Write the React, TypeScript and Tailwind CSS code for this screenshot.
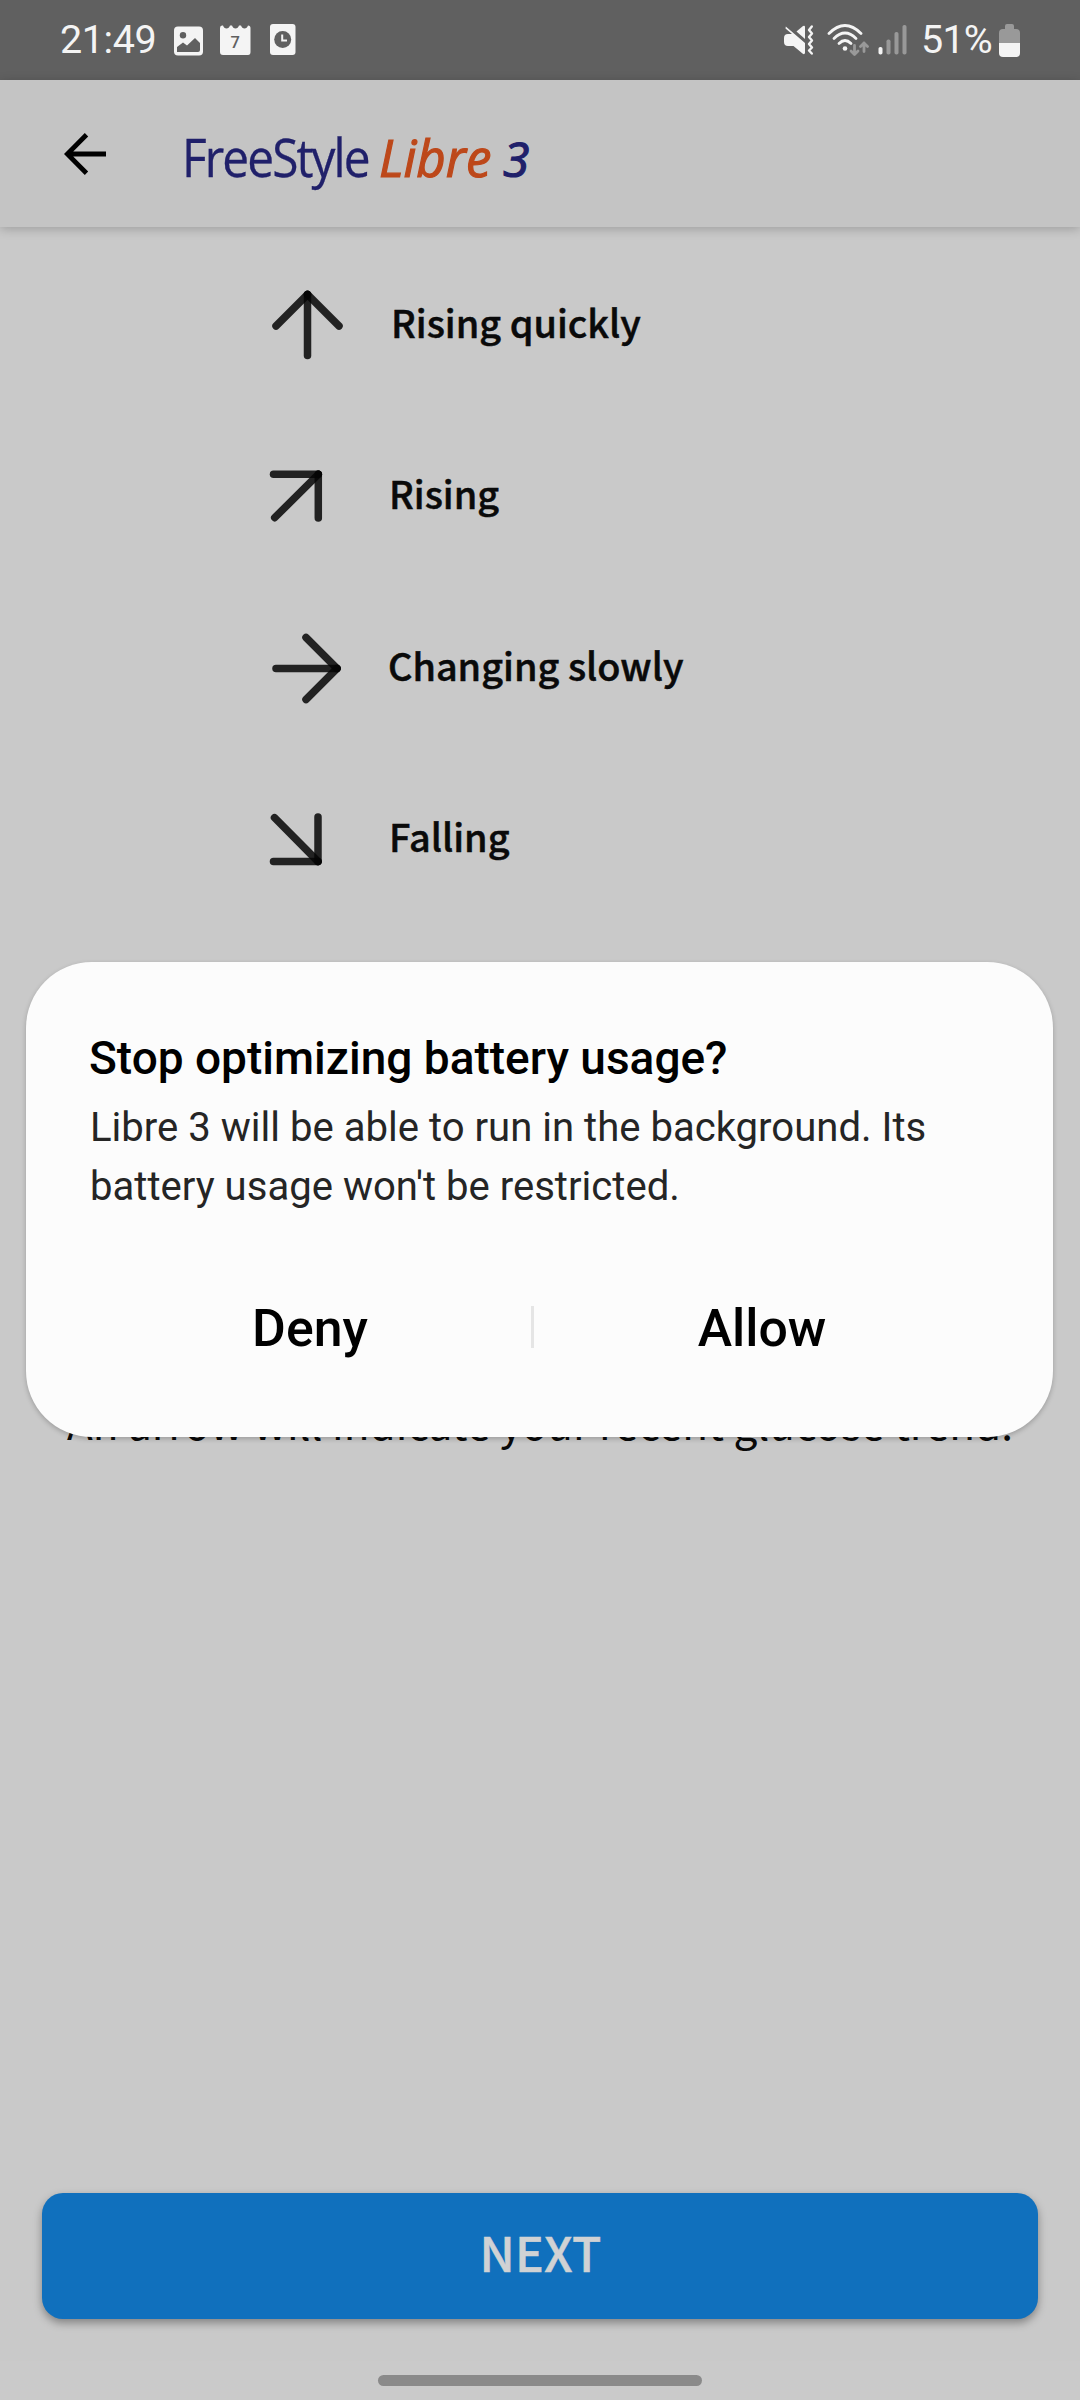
type Line = [number, number, number, number];

const trends: { label: string; lines: Line[]; pad: string }[] = [
  { label: "Rising quickly", pad: "pl-[45px]", lines: [[41.5, 9.5, 41.5, 70.5], [41.5, 9.5, 10, 41], [41.5, 9.5, 73, 41]] },
  { label: "Rising", pad: "pl-[43px]", lines: [[52.3, 18.3, 7.5, 18.3], [52.3, 18.3, 52.3, 62], [52.3, 18.3, 8.7, 61.7]] },
  { label: "Changing slowly", pad: "pl-[42px]", lines: [[71, 40.5, 10, 40.5], [71, 40.5, 40, 9.5], [71, 40.5, 40, 71.5]] },
  { label: "Falling", pad: "pl-[43px]", lines: [[52, 62.5, 7.5, 62.5], [52, 62.5, 52, 18], [52, 62.5, 8.5, 18.7]] },
];

function StatusBar() {
  return (
    <div className="flex h-[80px] shrink-0 items-center justify-between bg-[#606060] font-['Roboto',sans-serif] text-[39.5px] leading-[46px] text-[#f4f4f4]">
      <div className="flex items-center pl-[60px]">
        <span className="w-[114px] whitespace-nowrap tracking-[-0.4px]">21:49</span>
        <svg width="30" height="30" viewBox="0 0 30 30" className="mt-[1px]">
          <rect x="0" y="0.5" width="29" height="29" rx="4" fill="#f4f4f4" />
          <circle cx="9" cy="9.3" r="3.2" fill="#606060" />
          <path d="M3 26V21L9 16.5L13 19.5L21 12L26 17V24Q26 26 24 26Z" fill="#606060" />
        </svg>
        <svg width="31" height="31" viewBox="0 0 31 31" className="ml-[16px] mt-[1px]">
          <path
            d="M0 3Q0 .5 2 .5H3Q4 3.5 6.5 3.5T10 .5H12Q13 3.5 15.5 3.5T19 .5H21Q22 3.5 24.5 3.5T28 .5Q30.500 .5 30.500 3V27Q30.500 30 28 30H3Q0 30 0 27Z"
            fill="#f4f4f4"
          />
          <text x="15.3" y="22.800" textAnchor="middle" fontSize="16.5" fontWeight="500" fontFamily="Roboto" fill="#606060">7</text>
        </svg>
        <svg width="26" height="32" viewBox="0 0 26 32" className="ml-[19px]">
          <rect x="0" y="0" width="25.500" height="31" rx="3" fill="#f4f4f4" />
          <circle cx="12.700" cy="15.500" r="8.500" fill="#606060" />
          <path d="M12.200 10.500V16.500H17" fill="none" stroke="#f4f4f4" strokeWidth="2" />
        </svg>
      </div>
      <div className="flex items-center pr-[60px]">
        <svg width="31" height="32" viewBox="0 0 31 32">
          <path d="M1.800 2.500L21 19V29Q20.500 31 18.500 29.500L9.500 22H4Q0 22 0 18V14Q0 10 4 10H8L1.500 4.500Z" fill="#f4f4f4" />
          <path d="M12.500 7.500L19 2Q21 1 21 3V15Z" fill="#f4f4f4" />
          <path d="M27.800 2.500L25 6L28 9.500L25 13L28 16.500L25 20L28 23.500L25 26.500L27.800 29.500" fill="none" stroke="#f4f4f4" strokeWidth="2.400" strokeLinecap="round" strokeLinejoin="round" />
        </svg>
        <svg width="42" height="34" viewBox="0 0 42 34" className="ml-[12px]">
          <g fill="none" stroke="#f4f4f4" strokeWidth="2.800" strokeLinecap="round">
            <path d="M2 10.500Q18 -5.500 34 10.500" />
            <path d="M7 15.500Q18 4.500 29 15.500" />
            <path d="M12 20.500Q18 14.500 24 20.500" />
          </g>
          <circle cx="18" cy="25.500" r="2.300" fill="#f4f4f4" />
          <g fill="none" stroke="#999" strokeWidth="2.800" strokeLinecap="round" strokeLinejoin="round">
            <path d="M27.500 22.500V31M24 28L27.500 31.500L31 28" />
            <path d="M37 28.500V20M33.500 23.500L37 20L40.500 23.500" />
          </g>
        </svg>
        <svg width="29" height="32" viewBox="0 0 29 32" className="ml-[9px]">
          <rect x="0.500" y="23" width="4" height="7.500" rx="1.800" fill="#f4f4f4" />
          <rect x="8.500" y="15.500" width="4" height="15" rx="1.800" fill="#999" />
          <rect x="16.500" y="8" width="4" height="22.500" rx="1.800" fill="#999" />
          <rect x="24.500" y="1" width="4" height="29.500" rx="1.800" fill="#999" />
        </svg>
        <span className="ml-[14px] w-[78px] whitespace-nowrap tracking-[-0.800px]">51%</span>
        <svg width="21" height="33" viewBox="0 0 21 33">
          <path d="M6 5V2Q6 0 8 0H13Q15 0 15 2V5H17Q21 5 21 9V19H0V9Q0 5 4 5Z" fill="#999" />
          <path d="M0 19H21V29Q21 33 17 33H4Q0 33 0 29Z" fill="#f4f4f4" />
        </svg>
      </div>
    </div>
  );
}

function Header() {
  return (
    <header className="z-10 flex h-[147px] shrink-0 items-center bg-[#c4c4c4] pl-[64px] shadow-[0_2px_10px_rgba(0,0,0,0.22)]">
      <svg width="42" height="42" viewBox="0 0 42 42">
        <path d="M42 21H3M22.500 1.800L3.300 21L22.500 40.200" fill="none" stroke="#000" strokeWidth="4.800" />
      </svg>
      <div className="ml-[76px] mt-[20px] flex items-baseline whitespace-nowrap font-['Open_Sans',sans-serif] leading-[64px]">
        <span className="w-[197px]">
          <span className="inline-block origin-left scale-x-[0.91] text-[52.500px] tracking-[-2.100px] text-[#20206a] [-webkit-text-stroke:0.3px_#20206a]">
            FreeStyle
          </span>
        </span>
        <span className="w-[124px] text-[51px] italic text-[#bd481a] [-webkit-text-stroke:1.2px_#bd481a]">Libre</span>
        <span className="text-[48px] italic text-[#20206a] [-webkit-text-stroke:1.2px_#20206a]">3</span>
      </div>
    </header>
  );
}

function Dialog() {
  return (
    <div className="absolute left-[26px] top-[962px] z-20 flex h-[475px] w-[1027px] flex-col rounded-[66px] bg-[#fcfcfc] font-['Roboto',sans-serif] shadow-[0_2px_5px_rgba(0,0,0,0.22)]">
      <h1 className="mt-[69px] whitespace-nowrap pl-[63px] text-[46px] font-medium leading-[54px] text-black">
        Stop optimizing battery usage?
      </h1>
      <p className="mt-[13px] whitespace-nowrap pl-[64px] text-[40.080px] leading-[59px] text-[#252525]">
        Libre 3 will be able to run in the background. Its
        <br />
        battery usage won't be restricted.
      </p>
      <div className="mt-[68px] flex h-[90px] items-center text-[51.8px] font-medium text-black">
        <button className="w-[505px] pl-[63px] pr-0">Deny</button>
        <span className="mt-[-4px] h-[42px] w-[3px] bg-[#e5e5e5]" />
        <button className="flex-1 pr-[63px]">Allow</button>
      </div>
    </div>
  );
}

export default function App() {
  return (
    <div className="relative flex h-[2400px] w-[1080px] flex-col overflow-hidden bg-[#c9c9c9] font-['Noto_Sans_CJK_SC','Noto_Sans',sans-serif] text-[#0a0a0a]">
      <StatusBar />
      <Header />
      <main className="flex flex-1 flex-col pt-[12px]">
        {trends.map((t) => (
          <div key={t.label} className="flex h-[171.5px] shrink-0 items-center pl-[266px]">
            <svg width="80" height="80" viewBox="0 0 80 80">
              {t.lines.map(([x1, y1, x2, y2], i) => (
                <line key={i} x1={x1} y1={y1} x2={x2} y2={y2} stroke="#050505" strokeOpacity="0.85" strokeWidth="7.500" strokeLinecap="round" />
              ))}
            </svg>
            <span className={`${t.pad} mt-[-6px] whitespace-nowrap text-[37.8px] font-medium leading-[56px] [-webkit-text-stroke:0.5px_#0a0a0a]`}>
              {t.label}
            </span>
          </div>
        ))}
        <p className="mt-[468px] whitespace-nowrap text-center text-[42.300px] leading-[58px]">
          An arrow will indicate your recent glucose trend.
        </p>
      </main>
      <div className="flex h-[207px] shrink-0 flex-col items-center">
        <button className="h-[126px] w-[996px] rounded-[21px] bg-[#1070bd] pb-[11px] pl-[1px] text-[48px] font-medium tracking-[0.3px] text-[#d0d2d4] shadow-[0_4px_8px_rgba(0,0,0,0.35)] [-webkit-text-stroke:0.5px_#d0d2d4]">
          NEXT
        </button>
        <div className="mt-[42px] flex h-[39px] w-full justify-center bg-[#cacaca] pt-[14px]">
          <div className="h-[11px] w-[324px] rounded-full bg-[#8a8a8a]" />
        </div>
      </div>
      <Dialog />
    </div>
  );
}
